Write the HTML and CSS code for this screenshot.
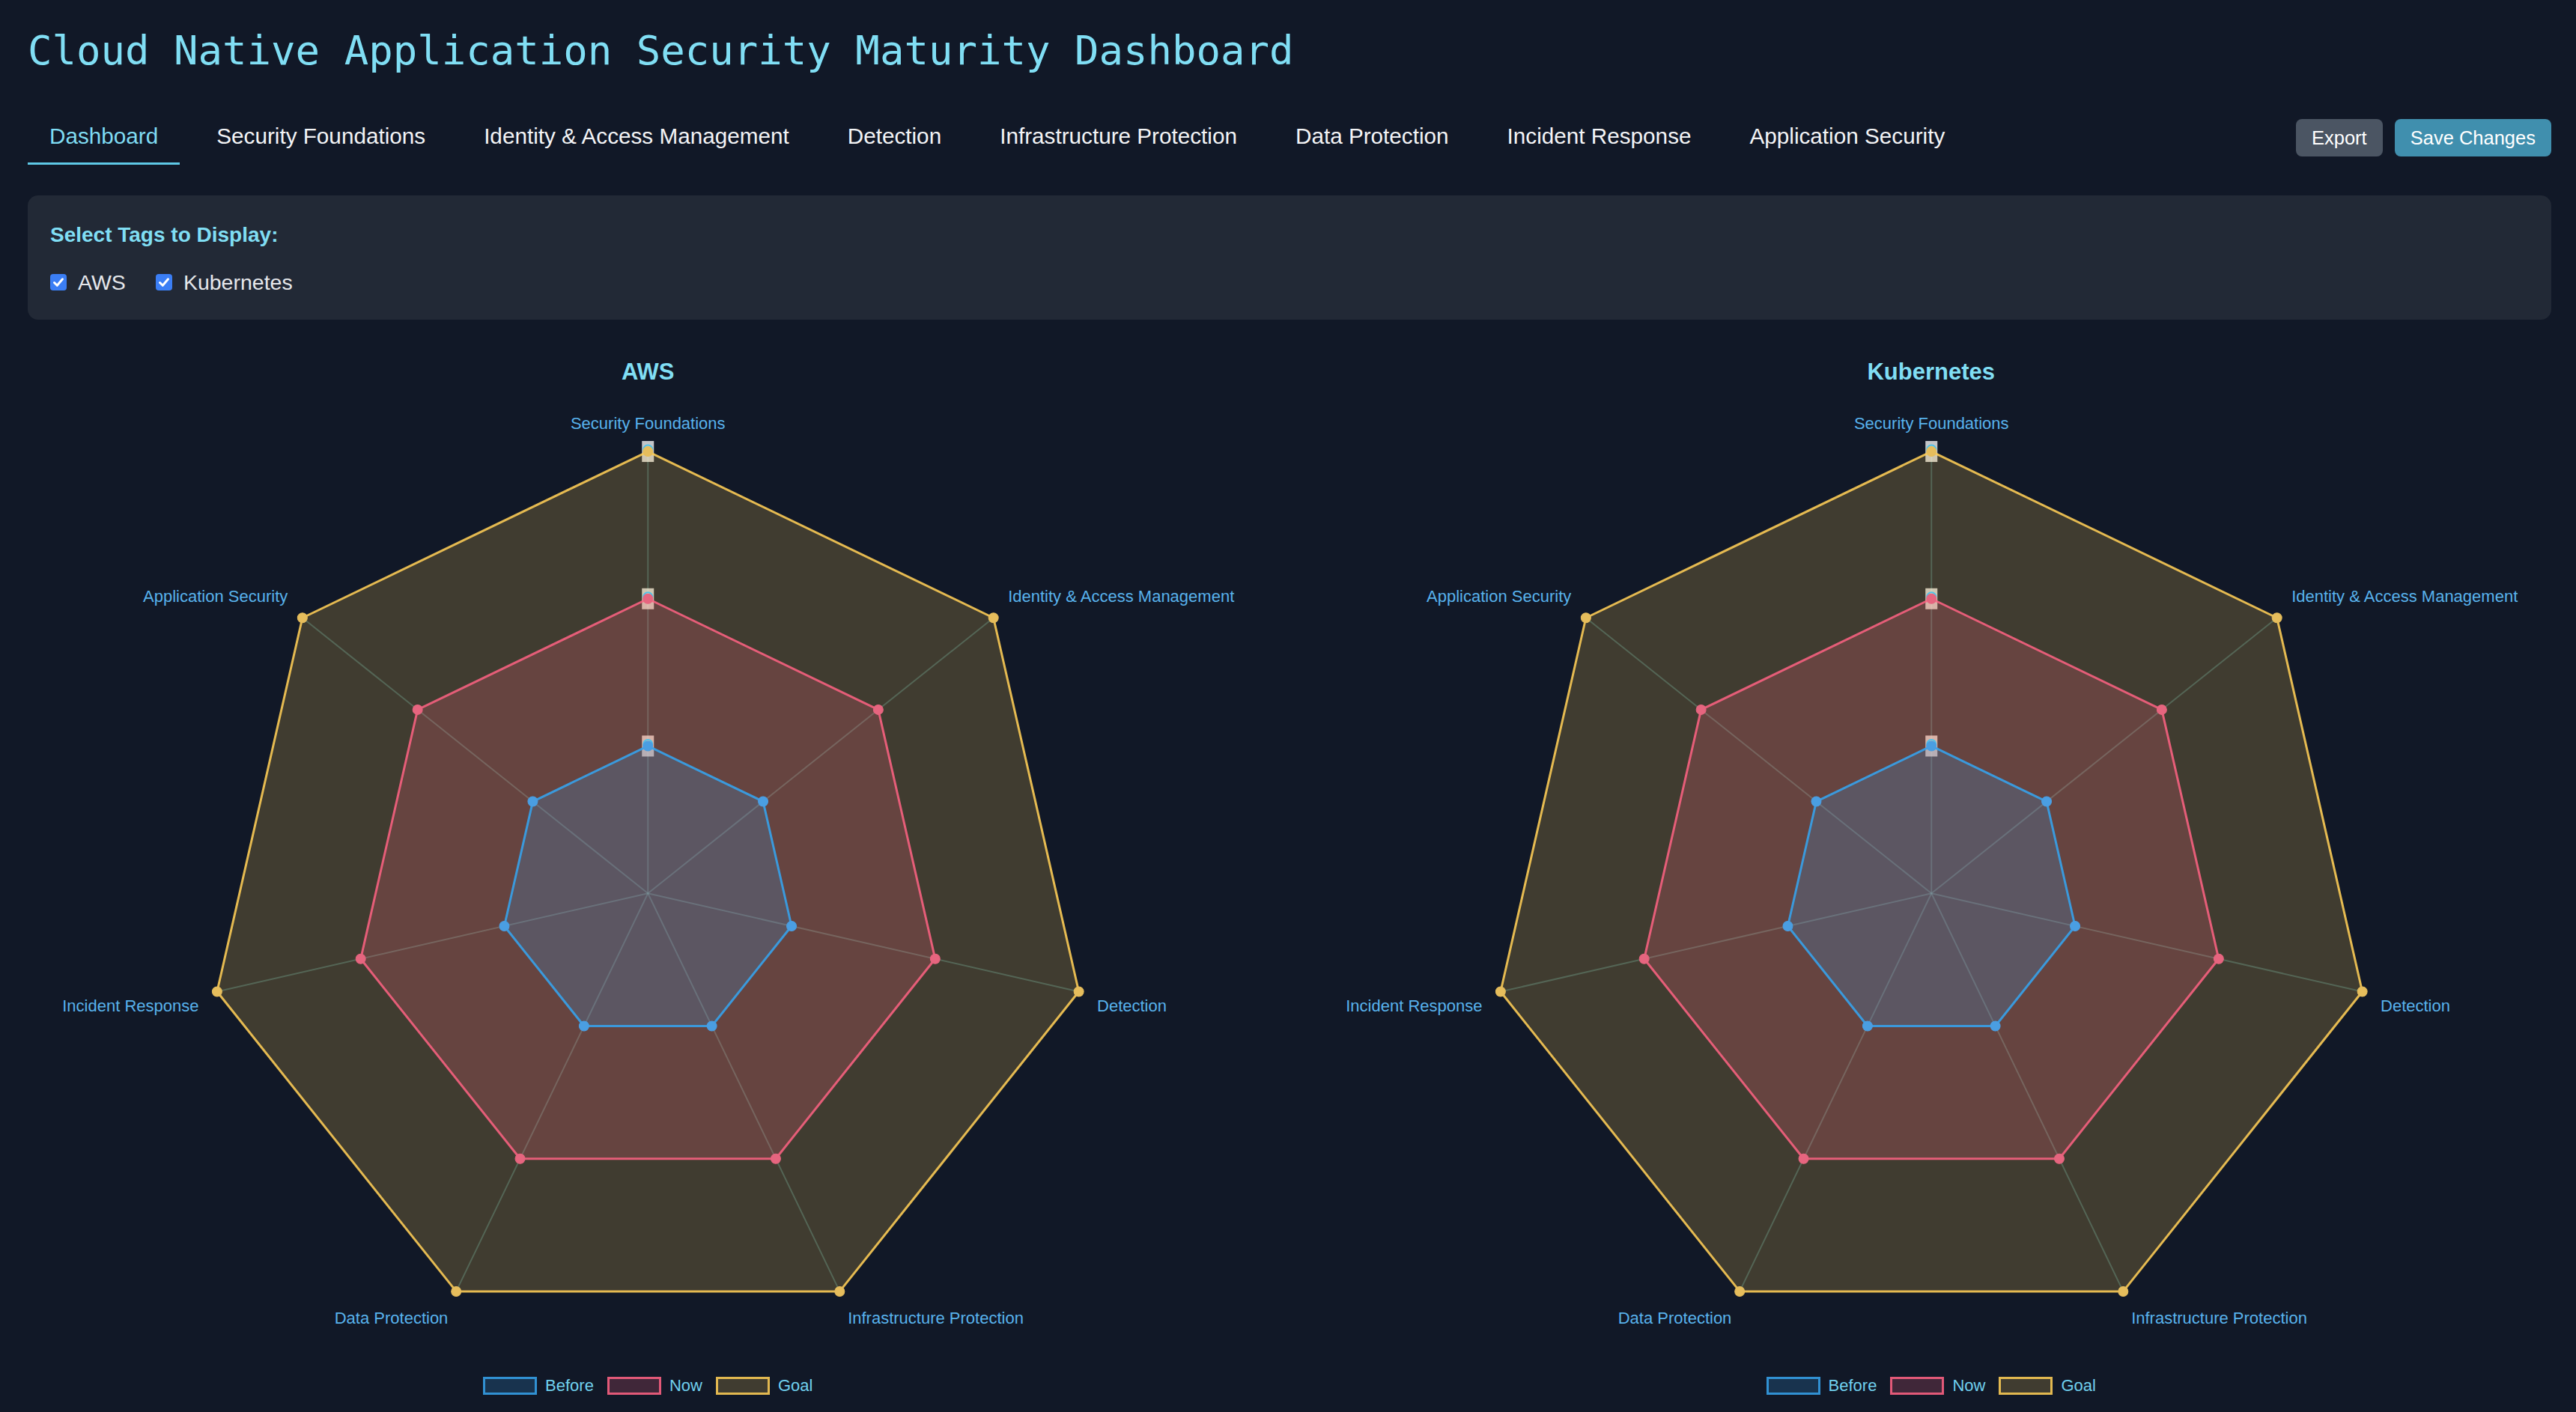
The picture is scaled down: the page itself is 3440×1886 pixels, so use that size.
FILE: index.html
```html
<!DOCTYPE html>
<html lang="en">
<head>
<meta charset="utf-8">
<title>Cloud Native Application Security Maturity Dashboard</title>
<link rel="stylesheet" href="styles.css">
</head>
<body>
<div class="app">
  <h1 class="title">Cloud Native Application Security Maturity Dashboard</h1>

  <div class="toolbar">
    <nav class="tabs">
      <button class="tab active">Dashboard</button>
      <button class="tab">Security Foundations</button>
      <button class="tab">Identity &amp; Access Management</button>
      <button class="tab">Detection</button>
      <button class="tab">Infrastructure Protection</button>
      <button class="tab">Data Protection</button>
      <button class="tab">Incident Response</button>
      <button class="tab">Application Security</button>
    </nav>
    <div class="actions">
      <button class="btn btn-gray">Export</button>
      <button class="btn btn-blue">Save Changes</button>
    </div>
  </div>

  <section class="tag-panel">
    <h2 class="tag-title">Select Tags to Display:</h2>
    <div class="tag-list">
      <label class="tag"><span class="check"><svg viewBox="0 0 22 22" width="22" height="22"><path d="M5.5 11.5 L9.3 15.3 L16.5 6.8" fill="none" stroke="#fff" stroke-width="3" stroke-linecap="round" stroke-linejoin="round"/></svg></span>AWS</label>
      <label class="tag"><span class="check"><svg viewBox="0 0 22 22" width="22" height="22"><path d="M5.5 11.5 L9.3 15.3 L16.5 6.8" fill="none" stroke="#fff" stroke-width="3" stroke-linecap="round" stroke-linejoin="round"/></svg></span>Kubernetes</label>
    </div>
  </section>

  <div class="charts">
    <div class="chart-card">
      <h3 class="chart-title">AWS</h3>
      <svg class="radar" viewBox="0 0 1656 1300">
        <g class="axis-lines">
          <line x1="828" y1="676" x2="828" y2="86"/>
          <line x1="828" y1="676" x2="1289.28" y2="308.14"/>
          <line x1="828" y1="676" x2="1403.21" y2="807.29"/>
          <line x1="828" y1="676" x2="1083.99" y2="1207.57"/>
          <line x1="828" y1="676" x2="572.01" y2="1207.57"/>
          <line x1="828" y1="676" x2="252.79" y2="807.29"/>
          <line x1="828" y1="676" x2="366.72" y2="308.14"/>
        </g>
        <g class="tick-backdrops">
          <rect x="820" y="465.33" width="16" height="28"/>
          <rect x="820" y="268.67" width="16" height="28"/>
          <rect x="820" y="72" width="16" height="28"/>
        </g>
        <polygon class="area area-goal" points="828,86 1289.28,308.14 1403.21,807.29 1083.99,1207.57 572.01,1207.57 252.79,807.29 366.72,308.14"/>
        <polygon class="area area-now" points="828,282.67 1135.52,430.76 1211.47,763.53 998.66,1030.38 657.34,1030.38 444.53,763.53 520.48,430.76"/>
        <polygon class="area area-before" points="828,479.33 981.76,553.38 1019.74,719.76 913.33,853.19 742.67,853.19 636.26,719.76 674.24,553.38"/>
        <g class="tick-arcs">
          <circle cx="828" cy="83.5" r="6"/>
          <circle cx="828" cy="280.2" r="6"/>
          <circle cx="828" cy="476.8" r="6"/>
        </g>
        <g class="pts pts-goal">
          <circle cx="828" cy="86" r="6.5"/><circle cx="1289.28" cy="308.14" r="6.5"/><circle cx="1403.21" cy="807.29" r="6.5"/><circle cx="1083.99" cy="1207.57" r="6.5"/><circle cx="572.01" cy="1207.57" r="6.5"/><circle cx="252.79" cy="807.29" r="6.5"/><circle cx="366.72" cy="308.14" r="6.5"/>
        </g>
        <g class="pts pts-now">
          <circle cx="828" cy="282.67" r="6.5"/><circle cx="1135.52" cy="430.76" r="6.5"/><circle cx="1211.47" cy="763.53" r="6.5"/><circle cx="998.66" cy="1030.38" r="6.5"/><circle cx="657.34" cy="1030.38" r="6.5"/><circle cx="444.53" cy="763.53" r="6.5"/><circle cx="520.48" cy="430.76" r="6.5"/>
        </g>
        <g class="pts pts-before">
          <circle cx="828" cy="479.33" r="6.5"/><circle cx="981.76" cy="553.38" r="6.5"/><circle cx="1019.74" cy="719.76" r="6.5"/><circle cx="913.33" cy="853.19" r="6.5"/><circle cx="742.67" cy="853.19" r="6.5"/><circle cx="636.26" cy="719.76" r="6.5"/><circle cx="674.24" cy="553.38" r="6.5"/>
        </g>
        <g class="point-labels">
          <text x="828" y="48" text-anchor="middle" dominant-baseline="central">Security Foundations</text>
          <text x="1308.8" y="279.4" text-anchor="start" dominant-baseline="central">Identity &amp; Access Management</text>
          <text x="1427.6" y="826" text-anchor="start" dominant-baseline="central">Detection</text>
          <text x="1094.8" y="1243.3" text-anchor="start" dominant-baseline="central">Infrastructure Protection</text>
          <text x="561.2" y="1243.3" text-anchor="end" dominant-baseline="central">Data Protection</text>
          <text x="228.4" y="826" text-anchor="end" dominant-baseline="central">Incident Response</text>
          <text x="347.2" y="279.4" text-anchor="end" dominant-baseline="central">Application Security</text>
        </g>
      </svg>
      <div class="legend">
        <span class="legend-item"><span class="swatch swatch-before"></span>Before</span>
        <span class="legend-item"><span class="swatch swatch-now"></span>Now</span>
        <span class="legend-item"><span class="swatch swatch-goal"></span>Goal</span>
      </div>
    </div>

    <div class="chart-card">
      <h3 class="chart-title">Kubernetes</h3>
      <svg class="radar" viewBox="0 0 1656 1300">
        <g class="axis-lines">
          <line x1="828" y1="676" x2="828" y2="86"/>
          <line x1="828" y1="676" x2="1289.28" y2="308.14"/>
          <line x1="828" y1="676" x2="1403.21" y2="807.29"/>
          <line x1="828" y1="676" x2="1083.99" y2="1207.57"/>
          <line x1="828" y1="676" x2="572.01" y2="1207.57"/>
          <line x1="828" y1="676" x2="252.79" y2="807.29"/>
          <line x1="828" y1="676" x2="366.72" y2="308.14"/>
        </g>
        <g class="tick-backdrops">
          <rect x="820" y="465.33" width="16" height="28"/>
          <rect x="820" y="268.67" width="16" height="28"/>
          <rect x="820" y="72" width="16" height="28"/>
        </g>
        <polygon class="area area-goal" points="828,86 1289.28,308.14 1403.21,807.29 1083.99,1207.57 572.01,1207.57 252.79,807.29 366.72,308.14"/>
        <polygon class="area area-now" points="828,282.67 1135.52,430.76 1211.47,763.53 998.66,1030.38 657.34,1030.38 444.53,763.53 520.48,430.76"/>
        <polygon class="area area-before" points="828,479.33 981.76,553.38 1019.74,719.76 913.33,853.19 742.67,853.19 636.26,719.76 674.24,553.38"/>
        <g class="tick-arcs">
          <circle cx="828" cy="83.5" r="6"/>
          <circle cx="828" cy="280.2" r="6"/>
          <circle cx="828" cy="476.8" r="6"/>
        </g>
        <g class="pts pts-goal">
          <circle cx="828" cy="86" r="6.5"/><circle cx="1289.28" cy="308.14" r="6.5"/><circle cx="1403.21" cy="807.29" r="6.5"/><circle cx="1083.99" cy="1207.57" r="6.5"/><circle cx="572.01" cy="1207.57" r="6.5"/><circle cx="252.79" cy="807.29" r="6.5"/><circle cx="366.72" cy="308.14" r="6.5"/>
        </g>
        <g class="pts pts-now">
          <circle cx="828" cy="282.67" r="6.5"/><circle cx="1135.52" cy="430.76" r="6.5"/><circle cx="1211.47" cy="763.53" r="6.5"/><circle cx="998.66" cy="1030.38" r="6.5"/><circle cx="657.34" cy="1030.38" r="6.5"/><circle cx="444.53" cy="763.53" r="6.5"/><circle cx="520.48" cy="430.76" r="6.5"/>
        </g>
        <g class="pts pts-before">
          <circle cx="828" cy="479.33" r="6.5"/><circle cx="981.76" cy="553.38" r="6.5"/><circle cx="1019.74" cy="719.76" r="6.5"/><circle cx="913.33" cy="853.19" r="6.5"/><circle cx="742.67" cy="853.19" r="6.5"/><circle cx="636.26" cy="719.76" r="6.5"/><circle cx="674.24" cy="553.38" r="6.5"/>
        </g>
        <g class="point-labels">
          <text x="828" y="48" text-anchor="middle" dominant-baseline="central">Security Foundations</text>
          <text x="1308.8" y="279.4" text-anchor="start" dominant-baseline="central">Identity &amp; Access Management</text>
          <text x="1427.6" y="826" text-anchor="start" dominant-baseline="central">Detection</text>
          <text x="1094.8" y="1243.3" text-anchor="start" dominant-baseline="central">Infrastructure Protection</text>
          <text x="561.2" y="1243.3" text-anchor="end" dominant-baseline="central">Data Protection</text>
          <text x="228.4" y="826" text-anchor="end" dominant-baseline="central">Incident Response</text>
          <text x="347.2" y="279.4" text-anchor="end" dominant-baseline="central">Application Security</text>
        </g>
      </svg>
      <div class="legend">
        <span class="legend-item"><span class="swatch swatch-before"></span>Before</span>
        <span class="legend-item"><span class="swatch swatch-now"></span>Now</span>
        <span class="legend-item"><span class="swatch swatch-goal"></span>Goal</span>
      </div>
    </div>
  </div>
</div>
</body>
</html>
```
FILE: styles.css
```css
html, body {
  margin: 0;
  background: #111827;
}

body {
  font-family: "Liberation Sans", Arial, sans-serif;
  color: #f3f4f6;
}

.app {
  padding: 35px 33px 0 37px;
}

.title {
  margin: 0;
  font-family: "DejaVu Sans Mono", "Liberation Mono", monospace;
  font-weight: normal;
  font-size: 54px;
  line-height: 65px;
  color: #80def4;
}

/* toolbar */
.toolbar {
  margin-top: 47px;
  display: flex;
  justify-content: space-between;
  align-items: center;
}

.tabs {
  display: flex;
  gap: 20px;
}

.tab {
  background: none;
  border: 0;
  border-bottom: 3px solid transparent;
  padding: 17px 29px;
  font-family: "Liberation Sans", Arial, sans-serif;
  font-size: 29.7px;
  line-height: 36px;
  color: #f3f4f6;
  cursor: pointer;
}

.tab.active {
  color: #7fdcf3;
  border-bottom-color: #5ec8e6;
}

.actions {
  display: flex;
  gap: 16px;
}

.btn {
  border: 0;
  border-radius: 8px;
  height: 50px;
  padding: 0 21px;
  font-family: "Liberation Sans", Arial, sans-serif;
  font-size: 25.5px;
  line-height: 50px;
  color: #ffffff;
  cursor: pointer;
}

.btn-gray {
  background: #4b5563;
}

.btn-blue {
  background: #408fae;
}

/* tag panel */
.tag-panel {
  margin-top: 41px;
  background: #222936;
  border-radius: 14px;
  padding: 32px 30px 32px;
}

.tag-title {
  margin: 0 0 24px;
  font-size: 28px;
  line-height: 42px;
  font-weight: bold;
  color: #80def4;
}

.tag-list {
  display: flex;
  gap: 40px;
}

.tag {
  display: flex;
  align-items: center;
  gap: 15px;
  font-size: 28.5px;
  line-height: 36px;
  color: #e5e7eb;
}

.check {
  width: 22px;
  height: 22px;
  border-radius: 4px;
  background: #3b7ef5;
  display: flex;
}

/* charts */
.charts {
  margin-top: 50px;
  display: grid;
  grid-template-columns: 1fr 1fr;
  gap: 57px;
}

.chart-title {
  margin: 0;
  text-align: center;
  font-size: 31px;
  line-height: 40px;
  font-weight: bold;
  color: #80def4;
}

.radar {
  display: block;
  width: 100%;
  height: auto;
}

.axis-lines line {
  stroke: rgba(90, 175, 175, 0.35);
  stroke-width: 2;
}

.tick-backdrops rect {
  fill: rgba(255, 255, 255, 0.75);
}

.area {
  stroke-width: 3;
  stroke-linejoin: round;
}

.area-goal {
  fill: rgba(255, 206, 86, 0.2);
  stroke: rgba(255, 206, 86, 0.88);
}

.area-now {
  fill: rgba(255, 99, 132, 0.2);
  stroke: rgba(255, 99, 132, 0.85);
}

.area-before {
  fill: rgba(54, 162, 235, 0.2);
  stroke: rgba(54, 162, 235, 0.9);
}

.tick-arcs circle {
  fill: none;
  stroke: #4cc2ea;
  stroke-width: 2;
}

.pts-goal circle {
  fill: #e6bd5c;
  stroke: #e6bd5c;
}

.pts-now circle {
  fill: #e6657f;
  stroke: #e6657f;
}

.pts-before circle {
  fill: #4a9ee2;
  stroke: #4a9ee2;
}

.point-labels text {
  font-family: "Liberation Sans", Arial, sans-serif;
  font-size: 22px;
  fill: #58b2ec;
}

.legend {
  margin-top: 19px;
  display: flex;
  justify-content: center;
  gap: 18px;
}

.legend-item {
  display: flex;
  align-items: center;
  gap: 11px;
  font-size: 22px;
  line-height: 30px;
  color: #70d0ee;
}

.swatch {
  width: 72px;
  height: 24px;
  box-sizing: border-box;
  border: 3px solid;
}

.swatch-before {
  border-color: rgba(54, 162, 235, 0.85);
  background: rgba(54, 162, 235, 0.2);
}

.swatch-now {
  border-color: rgba(255, 99, 132, 0.85);
  background: rgba(255, 99, 132, 0.2);
}

.swatch-goal {
  border-color: rgba(255, 206, 86, 0.85);
  background: rgba(255, 206, 86, 0.2);
}
```
